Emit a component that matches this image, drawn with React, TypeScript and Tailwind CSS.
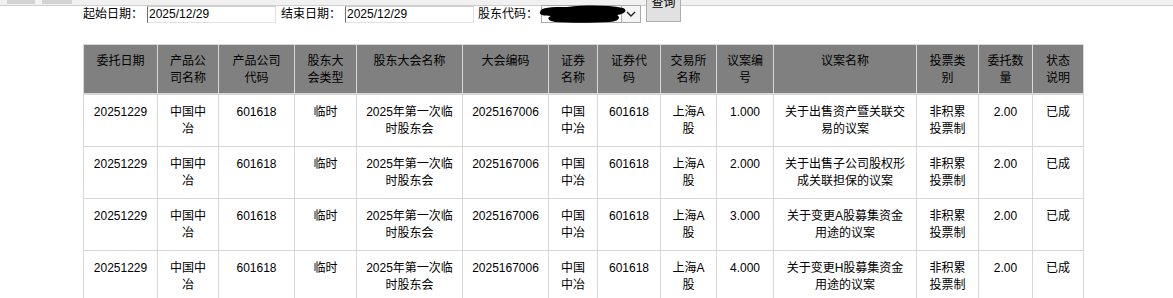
const headers = [
  "委托日期",
  "产品公司名称",
  "产品公司代码",
  "股东大会类型",
  "股东大会名称",
  "大会编码",
  "证券名称",
  "证券代码",
  "交易所名称",
  "议案编号",
  "议案名称",
  "投票类别",
  "委托数量",
  "状态说明",
];

const widths = [74, 61, 76, 62, 106, 86, 49, 63, 56, 57, 143, 62, 54, 51];

const motions = [
  { no: "1.000", name: "关于出售资产暨关联交易的议案" },
  { no: "2.000", name: "关于出售子公司股权形成关联担保的议案" },
  { no: "3.000", name: "关于变更A股募集资金用途的议案" },
  { no: "4.000", name: "关于变更H股募集资金用途的议案" },
];

function DateInput({ value }: { value: string }) {
  return (
    <input
      readOnly
      value={value}
      className="h-[17px] w-[129px] border border-[#e2e2e2] border-l-[#6f6f6f] border-t-[#d0d0d0] bg-white px-[1px] text-[12px] leading-[15px] text-black outline-none"
    />
  );
}

export default function App() {
  return (
    <div
      className="min-h-[298px] w-[1173px] bg-white text-[12px] text-black"
      style={{ fontFamily: '"Liberation Sans", "Noto Sans CJK SC", sans-serif' }}
    >
      {/* top strip */}
      <div className="flex h-[6px] gap-[7px] border-b border-[#cfcfcf] bg-[#f1f1f1] pl-[7px]">
        <div className="h-[4px] w-[28px] bg-[#d3d3d3]" />
        <div className="h-[4px] w-[30px] bg-[#d3d3d3]" />
      </div>

      {/* search form */}
      <div className="-mt-[1px] flex h-[18px] items-center pl-[83px]">
        <span className="w-[64px] leading-[17px]">起始日期：</span>
        <DateInput value="2025/12/29" />
        <span className="ml-[5px] w-[64px] leading-[17px]">结束日期：</span>
        <DateInput value="2025/12/29" />
        <span className="ml-[4px] w-[63px] leading-[17px]">股东代码：</span>
        <div className="relative flex h-[18px] w-[100px] items-stretch border border-[#a9a9a9] bg-white">
          <div className="flex-1" />
          <div className="flex w-[19px] items-center justify-center border-l border-[#a9a9a9] bg-[#f4f4f4]">
            <svg width="10" height="6" viewBox="0 0 10 6" fill="none">
              <path d="M1 1l4 4 4-4" stroke="#222" strokeWidth="1.4" />
            </svg>
          </div>
          {/* redacted value */}
          <svg
            className="absolute -left-[5px] -top-[2px]"
            width="90"
            height="20"
            viewBox="0 0 90 20"
          >
            <path
              d="M3 8 C 4 3, 14 3, 30 3 C 50 1, 70 1, 86 4 C 91 6, 88 10, 80 11 C 84 13, 82 18, 72 18 C 55 19, 35 19, 18 18 C 10 17, 10 13, 14 12 C 6 12, 2 11, 3 8 Z"
              fill="#000"
            />
          </svg>
        </div>
        <button className="relative z-10 ml-[5px] -mt-[11px] h-[27px] w-[35px] border border-[#adadad] bg-[#e1e1e1] pb-[12px] text-[12px] leading-[12px]">
          查询
        </button>
      </div>

      {/* table */}
      <table className="ml-[83px] mt-[21px] w-[1000px] table-fixed border-collapse text-center text-[12px] leading-[17px]">
        <colgroup>
          {widths.map((w, i) => (
            <col key={i} style={{ width: w }} />
          ))}
        </colgroup>
        <thead>
          <tr className="bg-[#808080]">
            {headers.map((h) => (
              <th
                key={h}
                className="border border-b-2 border-[#d8d8d8] px-2 pb-[6px] pt-[8px] align-top font-normal"
              >
                {h}
              </th>
            ))}
          </tr>
        </thead>
        <tbody>
          {motions.map((m) => (
            <tr key={m.no}>
              {[
                "20251229",
                "中国中冶",
                "601618",
                "临时",
                "2025年第一次临时股东会",
                "2025167006",
                "中国中冶",
                "601618",
                "上海A股",
                m.no,
                m.name,
                "非积累投票制",
                "2.00",
                "已成",
              ].map((c, i) => (
                <td
                  key={i}
                  className="border border-[#d8d8d8] px-2 pb-[8px] pt-[9px] align-top"
                >
                  {c}
                </td>
              ))}
            </tr>
          ))}
        </tbody>
      </table>
    </div>
  );
}
